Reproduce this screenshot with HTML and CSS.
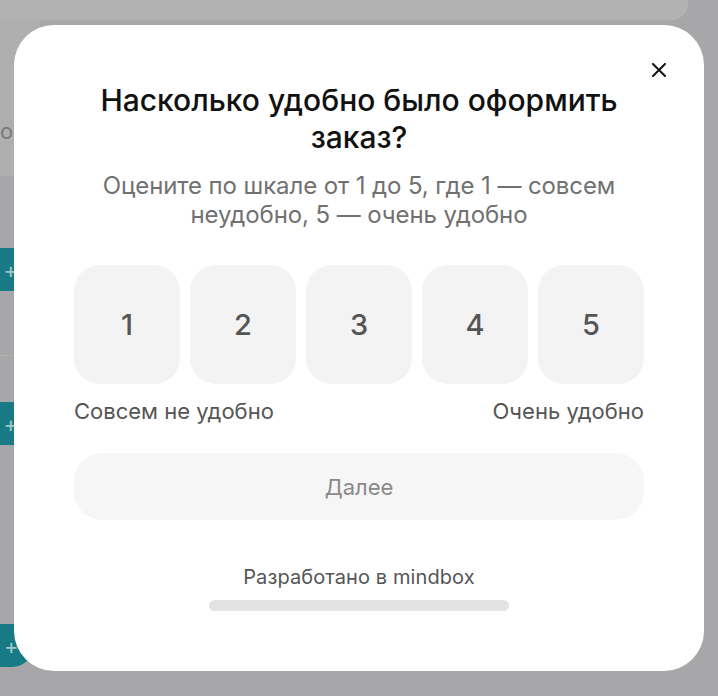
FILE: index.html
```html
<!DOCTYPE html>
<html lang="ru">
<head>
<meta charset="utf-8">
<title>Опрос</title>
<link rel="stylesheet" href="styles.css">
</head>
<body>
<div class="page">
  <div class="topbar"></div>
  <div class="side">
    <div class="side-head"><span class="side-letter">о</span></div>
    <div class="side-row"><span class="teal-btn">+</span></div>
    <div class="side-sep"></div>
    <div class="side-row second"><span class="teal-btn">+</span></div>
    <div class="side-row third"><span class="teal-btn round">+</span></div>
  </div>
</div>

<div class="modal" role="dialog">
  <button class="close" aria-label="Закрыть">
    <svg width="14" height="14" viewBox="0 0 14 14"><path d="M1 1 L13 13 M13 1 L1 13" stroke="#111" stroke-width="2" stroke-linecap="round"/></svg>
  </button>
  <h1 class="title">Насколько удобно было оформить заказ?</h1>
  <p class="subtitle">Оцените по шкале от 1 до 5, где 1 — совсем неудобно, 5 — очень удобно</p>
  <div class="scale">
    <button class="score">1</button>
    <button class="score">2</button>
    <button class="score">3</button>
    <button class="score">4</button>
    <button class="score">5</button>
  </div>
  <div class="labels">
    <span>Совсем не удобно</span>
    <span>Очень удобно</span>
  </div>
  <button class="next">Далее</button>
  <div class="footer">Разработано в mindbox</div>
  <div class="bar"></div>
</div>
</body>
</html>
```

FILE: styles.css
```css
* { box-sizing: border-box; }
html, body { margin: 0; padding: 0; }
body {
  width: 718px;
  height: 696px;
  overflow: hidden;
  background: #a7a7aa;
  font-family: Inter, "Noto Sans", sans-serif;
}
.page { position: relative; height: 696px; }
.topbar {
  width: 688px;
  height: 20px;
  background: #b2b2b3;
  border-bottom-right-radius: 16px;
}
.side {
  width: 40px;
  display: flex;
  flex-direction: column;
}
.side-head {
  height: 156px;
  background: #afafb0;
  display: flex;
  align-items: flex-start;
  padding-top: 98px;
}
.side-letter {
  font-size: 22px;
  color: #7a7a7c;
  margin-left: 0;
}
.side-row { padding-top: 72px; }
.side-row.second { padding-top: 46px; }
.side-row.third { padding-top: 179px; }
.side-sep { height: 1px; background: #b1b1b2; margin-top: 64px; }
.teal-btn {
  display: flex;
  align-items: center;
  justify-content: flex-end;
  width: 30px;
  height: 43px;
  background: #177a85;
  color: #9fc6cb;
  font-size: 22px;
  padding-right: 2px;
  margin-left: -10px;
}
.teal-btn.round {
  width: 44px;
  border-bottom-right-radius: 22px;
  justify-content: flex-start;
  padding-left: 14px;
}

.modal {
  position: absolute;
  left: 14px;
  top: 25px;
  width: 690px;
  height: 646px;
  background: #fff;
  border-radius: 40px;
  padding: 57px 60px 0;
  display: flex;
  flex-direction: column;
  align-items: stretch;
}
.close {
  position: absolute;
  top: 38px;
  right: 38px;
  width: 14px;
  height: 14px;
  padding: 0;
  border: 0;
  background: none;
  display: flex;
}
.title {
  margin: 0;
  font-size: 30px;
  font-weight: 500;
  line-height: 37px;
  color: #111;
  text-align: center;
  padding: 0 10px;
  letter-spacing: 0;
}
.subtitle {
  margin: 15px 0 0;
  font-size: 24px;
  line-height: 29px;
  color: #717171;
  text-align: center;
  padding: 0 10px;
  letter-spacing: -0.1px;
}
.scale {
  margin-top: 36px;
  display: grid;
  grid-template-columns: repeat(5, 1fr);
  gap: 10px;
}
.score {
  height: 119px;
  border: 0;
  border-radius: 26px;
  background: #f3f3f3;
  font-family: inherit;
  font-size: 29px;
  font-weight: 500;
  color: #555;
}
.labels {
  margin-top: 14px;
  display: flex;
  justify-content: space-between;
  font-size: 22px;
  line-height: 26px;
  color: #555;
  letter-spacing: 0;
}
.next {
  margin-top: 29px;
  height: 67px;
  border: 0;
  border-radius: 28px;
  background: #f6f6f6;
  font-family: inherit;
  font-size: 22px;
  color: #8a8a8a;
}
.footer {
  margin-top: 45px;
  text-align: center;
  font-size: 20px;
  line-height: 24px;
  color: #555;
  letter-spacing: 0.1px;
}
.bar {
  margin: 11px auto 0;
  width: 300px;
  height: 11px;
  border-radius: 6px;
  background: #e3e3e3;
}
```
